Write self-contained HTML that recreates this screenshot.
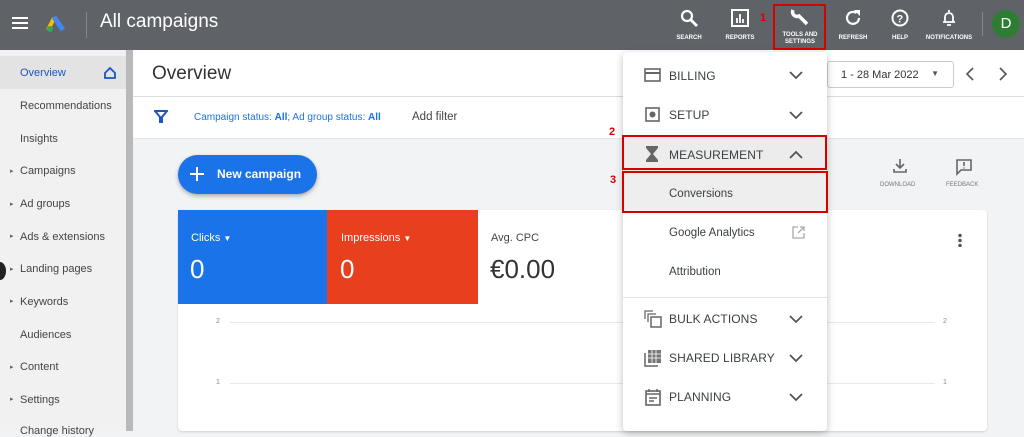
<!DOCTYPE html>
<html><head><style>
*{margin:0;padding:0;box-sizing:border-box}
body{width:1024px;height:431px;overflow:hidden;background:#f1f3f4;font-family:"Liberation Sans",sans-serif;position:relative;color:#3c4043}
.a{position:absolute}
.top{left:0;top:0;width:1024px;height:50px;background:#5f6368}
.side{left:0;top:50px;width:126px;height:381px;background:#f1f1f1}
.scr{left:126px;top:50px;width:7px;height:381px;background:#b9b9b9}
.si{position:absolute;left:20px;font-size:11px;color:#444}
.car{position:absolute;left:10px;font-size:7px;color:#666}
.ti{position:absolute;top:9px;text-align:center;color:#fff;font-size:6px;font-weight:bold;width:60px;line-height:7px}
.ti svg{display:block;margin:0 auto 8px}
.mi{position:absolute;left:669px;font-size:11.5px;color:#3c4043}
.mh{position:absolute;left:669px;font-size:12px;color:#3c4043;letter-spacing:.1px}
.chev{position:absolute;left:789px}
.red{position:absolute;border:2.5px solid #d50000}
.num{position:absolute;color:#d50000;font-size:11px;font-weight:bold}
</style></head><body>
<div class="a top"></div>
<svg class="a" style="left:12px;top:16px" width="16" height="14"><path d="M0 2h16M0 7h16M0 12h16" stroke="#fff" stroke-width="2"/></svg>
<svg class="a" style="left:46px;top:14px" width="20" height="18"><path d="M2 16L8 4" stroke="#fbbc04" stroke-width="4"/><path d="M8 3l9 13" stroke="#4285f4" stroke-width="5"/><circle cx="4" cy="15" r="3" fill="#34a853"/></svg>
<div class="a" style="left:86px;top:12px;width:1px;height:26px;background:#888"></div>
<div class="a" style="left:100px;top:11px;font-size:19px;color:#fff">All campaigns</div>
<div class="ti" style="left:659px"><svg width="18" height="18"><circle cx="7" cy="7" r="5" stroke="#fff" stroke-width="2.2" fill="none"/><path d="M11 11l6 6" stroke="#fff" stroke-width="2.8"/></svg>SEARCH</div>
<div class="ti" style="left:710px"><svg width="18" height="18"><rect x="1" y="1" width="16" height="16" stroke="#fff" stroke-width="2" fill="none"/><path d="M6 14V9M9 14V5M12 14V10" stroke="#fff" stroke-width="1.8"/></svg>REPORTS</div>
<div class="num" style="left:760px;top:12px">1</div>
<div class="ti" style="left:770px;top:8px"><svg width="20" height="18" style="margin-bottom:6px"><path d="M3 2a4.5 4.5 0 0 0 6 6l8 8" stroke="#fff" stroke-width="3.5" fill="none"/></svg>TOOLS AND<br>SETTINGS</div>
<div class="ti" style="left:823px"><svg width="18" height="18"><path d="M15 9a6 6 0 1 1-2.5-5" stroke="#fff" stroke-width="2.2" fill="none"/><path d="M10 1h6v6z" fill="#fff"/></svg>REFRESH</div>
<div class="ti" style="left:870px"><svg width="18" height="18"><circle cx="9" cy="9" r="7.5" stroke="#fff" stroke-width="2" fill="none"/><text x="5.5" y="13.5" font-size="11" fill="#fff" font-weight="bold" font-family="Liberation Sans">?</text></svg>HELP</div>
<div class="ti" style="left:919px"><svg width="18" height="18"><path d="M5 13V8a4 4 0 0 1 8 0v5h2H3z" stroke="#fff" stroke-width="1.8" fill="none"/><path d="M7 16h4M9 1v2" stroke="#fff" stroke-width="1.8"/></svg>NOTIFICATIONS</div>
<div class="a" style="left:982px;top:12px;width:1px;height:24px;background:#888"></div>
<div class="a" style="left:992px;top:10px;width:28px;height:28px;border-radius:50%;background:#2e7d32;color:#fff;font-size:15px;text-align:center;line-height:28px">D</div>
<div class="red" style="left:773px;top:4px;width:53px;height:46px"></div>

<div class="a side"></div>
<div class="a" style="left:0;top:56px;width:126px;height:33px;background:#e3e3e3"></div>
<div class="si" style="top:67px;color:#1a57c0">Overview</div>
<svg class="a" style="left:104px;top:67px" width="12" height="12"><path d="M1 6L6 1l5 5v5H1z" stroke="#1a57c0" stroke-width="1.8" fill="none"/></svg>
<div class="si" style="top:100px">Recommendations</div>
<div class="si" style="top:133px">Insights</div>
<div class="car" style="top:167px">▸</div><div class="si" style="top:165px">Campaigns</div>
<div class="car" style="top:200px">▸</div><div class="si" style="top:198px">Ad groups</div>
<div class="car" style="top:232px">▸</div><div class="si" style="top:231px">Ads &amp; extensions</div>
<div class="car" style="top:265px">▸</div><div class="si" style="top:263px">Landing pages</div>
<div class="a" style="left:-6px;top:262px;width:12px;height:18px;border-radius:50%;background:#222"></div>
<div class="car" style="top:297px">▸</div><div class="si" style="top:296px">Keywords</div>
<div class="si" style="top:329px">Audiences</div>
<div class="car" style="top:363px">▸</div><div class="si" style="top:361px">Content</div>
<div class="car" style="top:395px">▸</div><div class="si" style="top:394px">Settings</div>
<div class="si" style="top:425px">Change history</div>
<div class="a scr"></div>

<div class="a" style="left:133px;top:50px;width:891px;height:47px;background:#fff;border-bottom:1px solid #ddd"></div>
<div class="a" style="left:152px;top:63px;font-size:19px;color:#333">Overview</div>
<div class="a" style="left:827px;top:61px;width:127px;height:27px;border:1px solid #ccc;border-radius:3px;background:#fff;font-size:11px;color:#333;padding:7px 0 0 13px">1 - 28 Mar 2022<span style="position:absolute;right:14px;top:7px;font-size:8px;color:#555">▼</span></div>
<svg class="a" style="left:965px;top:67px" width="10" height="14"><path d="M8 1L2 7l6 6" stroke="#555" stroke-width="1.6" fill="none"/></svg>
<svg class="a" style="left:998px;top:67px" width="10" height="14"><path d="M2 1l6 6-6 6" stroke="#555" stroke-width="1.6" fill="none"/></svg>
<div class="a" style="left:133px;top:97px;width:891px;height:42px;background:#fff;border-bottom:1px solid #e6e6e6"></div>
<svg class="a" style="left:154px;top:110px" width="14" height="13"><path d="M1 1h12L8 7v5H6V7z" stroke="#1a57c0" stroke-width="2" fill="none"/></svg>
<div class="a" style="left:194px;top:112px;font-size:10px;color:#1a73e8">Campaign status: <b>All</b>; Ad group status: <b>All</b></div>
<div class="a" style="left:412px;top:111px;font-size:11.5px;color:#444">Add filter</div>

<div class="a" style="left:178px;top:155px;width:139px;height:39px;border-radius:20px;background:#1a73e8;box-shadow:0 2px 4px rgba(0,0,0,.3);color:#fff;font-size:12px;font-weight:bold;padding:12px 0 0 39px">New campaign</div>
<svg class="a" style="left:190px;top:167px" width="14" height="14"><path d="M7 0v14M0 7h14" stroke="#fff" stroke-width="2"/></svg>
<svg class="a" style="left:892px;top:158px" width="16" height="16"><path d="M8 1v9M4 6l4 4 4-4M2 11v3h12v-3" stroke="#666" stroke-width="1.6" fill="none"/></svg>
<div class="a" style="left:880px;top:182px;font-size:6px;color:#777">DOWNLOAD</div>
<svg class="a" style="left:955px;top:158px" width="18" height="18"><path d="M2 2h14v10H6l-4 4z" stroke="#666" stroke-width="1.6" fill="none"/><path d="M9 4v4M9 9.5v1" stroke="#666" stroke-width="1.6"/></svg>
<div class="a" style="left:946px;top:182px;font-size:6px;color:#777">FEEDBACK</div>

<div class="a" style="left:178px;top:210px;width:809px;height:221px;background:#fff;border-radius:4px;box-shadow:0 1px 2px rgba(0,0,0,.15)"></div>
<div class="a" style="left:178px;top:210px;width:149px;height:94px;background:#1a73e8"></div>
<div class="a" style="left:327px;top:210px;width:151px;height:94px;background:#e8401f"></div>
<div class="a" style="left:191px;top:232px;font-size:11px;color:#fff">Clicks <span style="font-size:8px">▼</span></div>
<div class="a" style="left:190px;top:254px;font-size:26px;color:#fff">0</div>
<div class="a" style="left:341px;top:232px;font-size:11px;color:#fff">Impressions <span style="font-size:8px">▼</span></div>
<div class="a" style="left:340px;top:254px;font-size:26px;color:#fff">0</div>
<div class="a" style="left:491px;top:232px;font-size:11px;color:#444">Avg. CPC</div>
<div class="a" style="left:490px;top:254px;font-size:26px;color:#333">€0.00</div>
<div class="a" style="left:958px;top:233px;width:4px;height:14px;background:radial-gradient(circle,#555 1.5px,transparent 2px) 0 0/4px 5px"></div>
<div class="a" style="left:216px;top:318px;font-size:7px;color:#888">2</div>
<div class="a" style="left:230px;top:322px;width:705px;height:1px;background:#e8e8e8"></div>
<div class="a" style="left:943px;top:318px;font-size:7px;color:#888">2</div>
<div class="a" style="left:216px;top:379px;font-size:7px;color:#888">1</div>
<div class="a" style="left:230px;top:383px;width:705px;height:1px;background:#e8e8e8"></div>
<div class="a" style="left:943px;top:379px;font-size:7px;color:#888">1</div>

<div class="a" style="left:623px;top:52px;width:204px;height:379px;background:#fff;border-radius:4px;box-shadow:0 2px 8px rgba(0,0,0,.25)"></div>
<svg class="a" style="left:644px;top:68px" width="17" height="14"><rect x="1" y="1" width="15" height="12" stroke="#666" stroke-width="1.6" fill="none"/><path d="M1 5h15" stroke="#666" stroke-width="2"/></svg>
<div class="mh" style="top:69px">BILLING</div>
<svg class="a" style="left:645px;top:107px" width="15" height="15"><rect x="1" y="1" width="13" height="13" stroke="#666" stroke-width="1.6" fill="none"/><circle cx="7.5" cy="7.5" r="3" fill="#666"/></svg>
<div class="mh" style="top:108px">SETUP</div>
<div class="a" style="left:623px;top:137px;width:204px;height:34px;background:#ececec"></div>
<svg class="a" style="left:646px;top:146px" width="12" height="16"><path d="M0 0h12v2L7 8l5 6v2H0v-2l5-6L0 2z" fill="#666"/></svg>
<div class="mh" style="top:148px">MEASUREMENT</div>
<div class="a" style="left:623px;top:173px;width:204px;height:39px;background:#eee"></div>
<div class="mi" style="top:188px">Conversions</div>
<div class="mi" style="top:227px">Google Analytics</div>
<svg class="a" style="left:792px;top:226px" width="13" height="13"><path d="M6 1H1v11h11V7M8 1h4v4M12 1L6 7" stroke="#aaa" stroke-width="1.3" fill="none"/></svg>
<div class="mi" style="top:266px">Attribution</div>
<div class="a" style="left:623px;top:297px;width:208px;height:1px;background:#e4e4e4"></div>
<svg class="a" style="left:644px;top:310px" width="18" height="18"><path d="M1 9V1h8M4 12V4h8" stroke="#666" stroke-width="1.3" fill="none"/><rect x="7" y="7" width="10" height="10" stroke="#666" stroke-width="1.5" fill="none"/></svg>
<div class="mh" style="top:312px">BULK ACTIONS</div>
<svg class="a" style="left:644px;top:349px" width="18" height="18"><path d="M1 4v13h13" stroke="#666" stroke-width="1.5" fill="none"/><rect x="4" y="1" width="13" height="13" fill="#777"/><path d="M8 1v13M12 1v13M4 5h13M4 9h13" stroke="#fff" stroke-width=".8"/></svg>
<div class="mh" style="top:351px">SHARED LIBRARY</div>
<svg class="a" style="left:645px;top:388px" width="16" height="18"><rect x="1" y="3" width="14" height="14" stroke="#666" stroke-width="1.6" fill="none"/><path d="M1 6h14M4 1v3M12 1v3M4 10h8M4 13h5" stroke="#666" stroke-width="1.5"/></svg>
<div class="mh" style="top:390px">PLANNING</div>
<svg class="chev" style="top:71px" width="14" height="9"><path d="M1 1l6 6 6-6" stroke="#555" stroke-width="1.8" fill="none"/></svg>
<svg class="chev" style="top:111px" width="14" height="9"><path d="M1 1l6 6 6-6" stroke="#555" stroke-width="1.8" fill="none"/></svg>
<svg class="chev" style="top:150px" width="14" height="9"><path d="M1 8l6-6 6 6" stroke="#555" stroke-width="1.8" fill="none"/></svg>
<svg class="chev" style="top:315px" width="14" height="9"><path d="M1 1l6 6 6-6" stroke="#555" stroke-width="1.8" fill="none"/></svg>
<svg class="chev" style="top:354px" width="14" height="9"><path d="M1 1l6 6 6-6" stroke="#555" stroke-width="1.8" fill="none"/></svg>
<svg class="chev" style="top:393px" width="14" height="9"><path d="M1 1l6 6 6-6" stroke="#555" stroke-width="1.8" fill="none"/></svg>
<div class="red" style="left:622px;top:135px;width:205px;height:35px"></div>
<div class="red" style="left:622px;top:171px;width:206px;height:42px"></div>
<div class="num" style="left:609px;top:126px">2</div>
<div class="num" style="left:610px;top:174px">3</div>
</body></html>
